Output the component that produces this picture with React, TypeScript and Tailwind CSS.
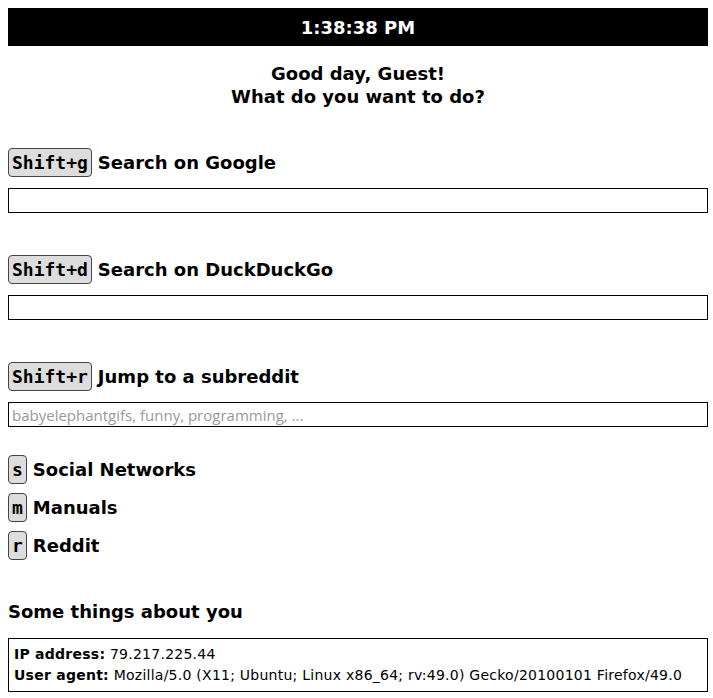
const sections = [
  { key: "Shift+g", label: "Search on Google", placeholder: "" },
  { key: "Shift+d", label: "Search on DuckDuckGo", placeholder: "" },
  {
    key: "Shift+r",
    label: "Jump to a subreddit",
    placeholder: "babyelephantgifs, funny, programming, ...",
  },
];

const menus = [
  { key: "s", label: "Social Networks" },
  { key: "m", label: "Manuals" },
  { key: "r", label: "Reddit" },
];

const Kbd = ({ children }: { children: string }) => (
  <kbd className="inline-block h-[29px] px-[3px] border border-[#444] rounded-[4px] bg-[#dddddd] font-['DejaVu_Sans_Mono',monospace] font-bold text-[18px] leading-[27px] text-black">
    {children}
  </kbd>
);

export default function App() {
  return (
    <div className="min-h-[698px] bg-white pl-2 pr-[5px] pt-2 text-black font-['DejaVu_Sans',sans-serif]">
      <div className="h-[38px] bg-black flex items-center justify-center text-white font-bold text-[18px]">
        1:38:38 PM
      </div>

      <div className="mt-[16px] text-center font-bold text-[18px] leading-[23px]">
        <div>Good day, Guest!</div>
        <div>What do you want to do?</div>
      </div>

      <div className="mt-[40px] flex flex-col gap-[42px]">
        {sections.map((s) => (
          <div key={s.key}>
            <div className="flex items-center gap-[6px]">
              <Kbd>{s.key}</Kbd>
              <span className="font-bold text-[18px]">{s.label}</span>
            </div>
            <input
              className="mt-[11px] block w-full h-[25px] border border-black px-[3px] font-['Open_Sans',sans-serif] text-[15px] placeholder:text-[#999] outline-none"
              placeholder={s.placeholder}
            />
          </div>
        ))}
      </div>

      <div className="mt-[28px] flex flex-col gap-[9px]">
        {menus.map((m) => (
          <div key={m.key} className="flex items-center gap-[6px]">
            <Kbd>{m.key}</Kbd>
            <span className="font-bold text-[18px]">{m.label}</span>
          </div>
        ))}
      </div>

      <h2 className="mt-[40px] font-bold text-[18px] leading-[24px]">
        Some things about you
      </h2>
      <div className="mt-[14px] border border-black px-[5px] py-[5px] text-[14px] tracking-[0.25px] leading-[21px]">
        <div>
          <b>IP address:</b> 79.217.225.44
        </div>
        <div>
          <b>User agent:</b> Mozilla/5.0 (X11; Ubuntu; Linux x86_64; rv:49.0) Gecko/20100101 Firefox/49.0
        </div>
      </div>
    </div>
  );
}
